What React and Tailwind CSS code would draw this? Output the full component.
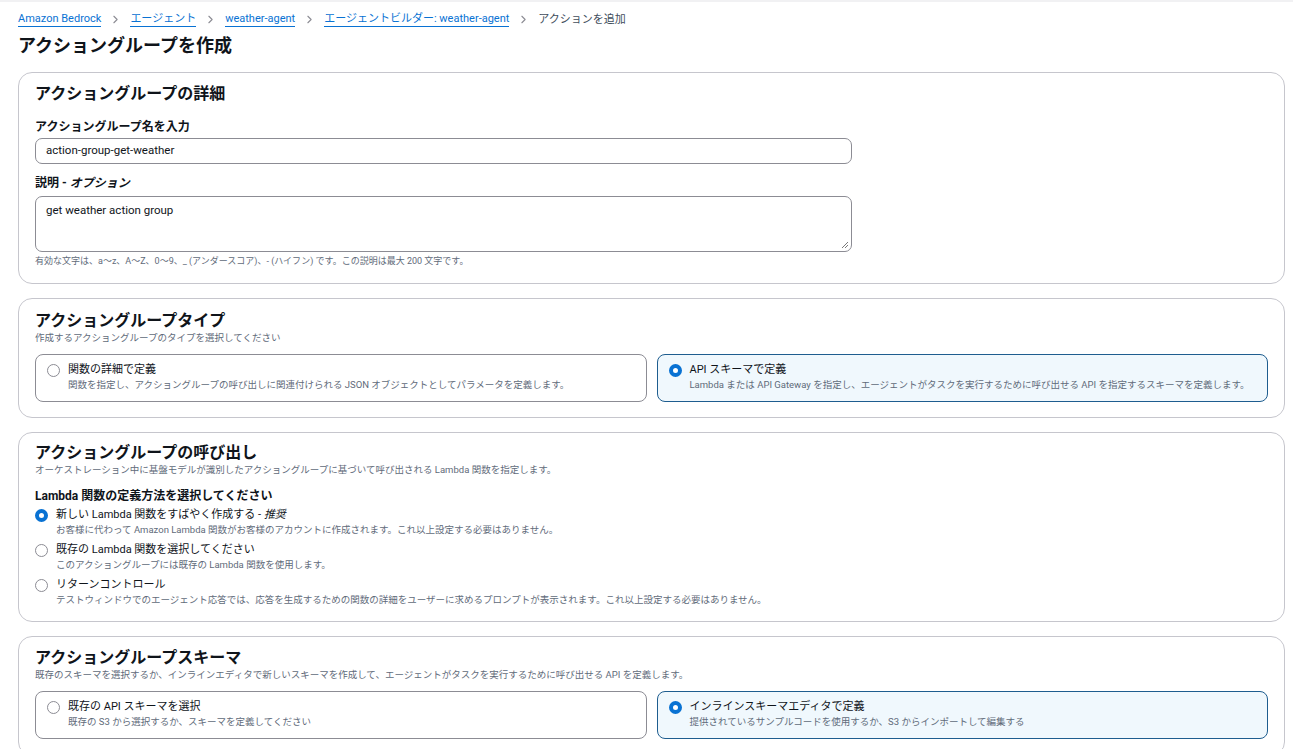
import { ChevronRight } from 'lucide-react'

const font = { fontFamily: 'Roboto, "Noto Sans CJK JP", sans-serif' }

const crumbs = [
  { label: 'Amazon Bedrock', link: true },
  { label: 'エージェント', link: true },
  { label: 'weather-agent', link: true },
  { label: 'エージェントビルダー: weather-agent', link: true },
  { label: 'アクションを追加', link: false },
]

function Radio({ checked }) {
  return checked ? (
    <span className="mt-[1.5px] block size-[13px] shrink-0 rounded-full border-4 border-[#0972d3] bg-white" />
  ) : (
    <span className="mt-[1.5px] block size-[13px] shrink-0 rounded-full border-[1.5px] border-[#8c8c94] bg-white" />
  )
}

function Tile({ checked, title, desc }) {
  return (
    <div
      className={[
        'flex h-[48px] flex-1 items-start gap-[8px] rounded-[8px] border px-[11px] pt-[7px]',
        checked ? 'border-[#1e5d8f] bg-[#f0f8fd]' : 'border-[#8c8c94] bg-white',
      ].join(' ')}
    >
      <Radio checked={checked} />
      <div className="min-w-0">
        <p className="text-[11px] leading-[16px] text-[#0f141a]">{title}</p>
        <p className="text-[9.5px] leading-[14px] text-[#5f6b7a]">{desc}</p>
      </div>
    </div>
  )
}

function Card({ children, className = '' }) {
  return (
    <section className={'rounded-[14px] border border-[#c6c6cd] bg-white px-[16px] ' + className}>
      {children}
    </section>
  )
}

function Heading({ children }) {
  return <h2 className="text-[16px] font-bold leading-[20px] text-[#0f141a]">{children}</h2>
}

function Sub({ children }) {
  return <p className="text-[9.5px] leading-[13px] text-[#5f6b7a]">{children}</p>
}

const lambdaOptions = [
  {
    checked: true,
    title: (
      <>
        新しい Lambda 関数をすばやく作成する - <i>推奨</i>
      </>
    ),
    desc: 'お客様に代わって Amazon Lambda 関数がお客様のアカウントに作成されます。これ以上設定する必要はありません。',
  },
  {
    checked: false,
    title: '既存の Lambda 関数を選択してください',
    desc: 'このアクショングループには既存の Lambda 関数を使用します。',
  },
  {
    checked: false,
    title: 'リターンコントロール',
    desc: 'テストウィンドウでのエージェント応答では、応答を生成するための関数の詳細をユーザーに求めるプロンプトが表示されます。これ以上設定する必要はありません。',
  },
]

export default function App() {
  return (
    <div style={font} className="h-[749px] overflow-hidden border-t-2 border-[#f1f1f3] bg-white pl-[18px] pr-[8px] text-[#0f141a]">
      <nav className="flex h-[32px] items-center pt-[2px] text-[11px]">
        {crumbs.map((c, i) => (
          <div key={i} className="flex items-center">
            {c.link ? (
              <span className="border-b border-[#0972d3] leading-[15px] text-[#0972d3]">{c.label}</span>
            ) : (
              <span className="leading-[15px] text-[#414d5c]">{c.label}</span>
            )}
            {i < crumbs.length - 1 && (
              <ChevronRight className="mx-[8px] size-[13px] text-[#8c8c94]" strokeWidth={2} />
            )}
          </div>
        ))}
      </nav>
      <h1 className="text-[18px] font-bold leading-[24px]">アクショングループを作成</h1>

      <div className="mt-[14px] flex flex-col gap-[14px]">
        <Card className="pt-[11px] pb-[15px]">
          <Heading>アクショングループの詳細</Heading>
          <p className="mt-[15px] text-[12px] font-bold leading-[16px]">アクショングループ名を入力</p>
          <div className="mt-[3px] flex h-[26px] w-[817px] items-center rounded-[7px] border border-[#8c8c94] px-[10px] text-[11.5px]">
            action-group-get-weather
          </div>
          <p className="mt-[11px] text-[12px] font-bold leading-[16px]">
            説明 - <i>オプション</i>
          </p>
          <div className="relative mt-[5px] h-[56px] w-[817px] rounded-[7px] border border-[#8c8c94] px-[10px] pt-[5px] text-[11.5px]">
            get weather action group
            <svg className="absolute right-[2px] bottom-[2px]" width="8" height="8" viewBox="0 0 8 8">
              <path d="M7 1 L1 7 M7 4 L4 7" stroke="#6b6b6b" strokeWidth="0.9" />
            </svg>
          </div>
          <p className="mt-[2px] text-[9px] leading-[14px] text-[#5f6b7a]">
            有効な文字は、a〜z、A〜Z、0〜9、_ (アンダースコア)、- (ハイフン) です。この説明は最大 200 文字です。
          </p>
        </Card>

        <Card className="pt-[12px] pb-[15px]">
          <Heading>アクショングループタイプ</Heading>
          <Sub>作成するアクショングループのタイプを選択してください</Sub>
          <div className="mt-[10px] flex gap-[10px]">
            <Tile
              checked={false}
              title="関数の詳細で定義"
              desc="関数を指定し、アクショングループの呼び出しに関連付けられる JSON オブジェクトとしてパラメータを定義します。"
            />
            <Tile
              checked
              title="API スキーマで定義"
              desc="Lambda または API Gateway を指定し、エージェントがタスクを実行するために呼び出せる API を指定するスキーマを定義します。"
            />
          </div>
        </Card>

        <Card className="pt-[10px] pb-[14px]">
          <Heading>アクショングループの呼び出し</Heading>
          <Sub>オーケストレーション中に基盤モデルが識別したアクショングループに基づいて呼び出される Lambda 関数を指定します。</Sub>
          <p className="mt-[12px] text-[12px] font-bold leading-[16px]">Lambda 関数の定義方法を選択してください</p>
          <div className="mt-[3px] flex flex-col gap-[5px]">
            {lambdaOptions.map((o, i) => (
              <div key={i} className="flex items-start gap-[8px]">
                <Radio checked={o.checked} />
                <div>
                  <p className="text-[11px] leading-[16px]">{o.title}</p>
                  <p className="text-[9.5px] leading-[14px] text-[#5f6b7a]">{o.desc}</p>
                </div>
              </div>
            ))}
          </div>
        </Card>

        <Card className="pt-[11px] pb-[16px]">
          <Heading>アクショングループスキーマ</Heading>
          <Sub>既存のスキーマを選択するか、インラインエディタで新しいスキーマを作成して、エージェントがタスクを実行するために呼び出せる API を定義します。</Sub>
          <div className="mt-[10px] flex gap-[10px]">
            <Tile checked={false} title="既存の API スキーマを選択" desc="既存の S3 から選択するか、スキーマを定義してください" />
            <Tile
              checked
              title="インラインスキーマエディタで定義"
              desc="提供されているサンプルコードを使用するか、S3 からインポートして編集する"
            />
          </div>
        </Card>
      </div>
    </div>
  )
}
